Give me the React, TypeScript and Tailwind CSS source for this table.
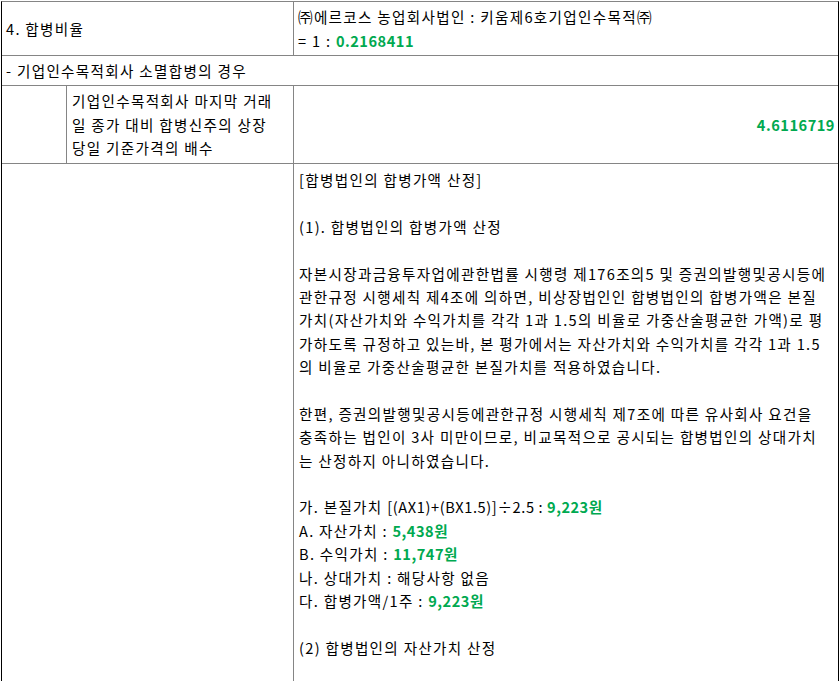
const green = "font-bold tracking-[0.5px] text-[#00a950]";

const valuationLines: { text: string; formula?: string; value?: string }[] = [
  { text: "[합병법인의 합병가액 산정]" },
  { text: "" },
  { text: "(1). 합병법인의 합병가액 산정" },
  { text: "" },
  { text: "자본시장과금융투자업에관한법률 시행령 제176조의5 및 증권의발행및공시등에" },
  { text: "관한규정 시행세칙 제4조에 의하면, 비상장법인인 합병법인의 합병가액은 본질" },
  { text: "가치(자산가치와 수익가치를 각각 1과 1.5의 비율로 가중산술평균한 가액)로 평" },
  { text: "가하도록 규정하고 있는바, 본 평가에서는 자산가치와 수익가치를 각각 1과 1.5" },
  { text: "의 비율로 가중산술평균한 본질가치를 적용하였습니다." },
  { text: "" },
  { text: "한편, 증권의발행및공시등에관한규정 시행세칙 제7조에 따른 유사회사 요건을" },
  { text: "충족하는 법인이 3사 미만이므로, 비교목적으로 공시되는 합병법인의 상대가치" },
  { text: "는 산정하지 아니하였습니다." },
  { text: "" },
  { text: "가. 본질가치 ", formula: "[(AX1)+(BX1.5)]÷2.5 : ", value: "9,223원" },
  { text: "A. 자산가치 : ", value: "5,438원" },
  { text: "B. 수익가치 : ", value: "11,747원" },
  { text: "나. 상대가치 : 해당사항 없음" },
  { text: "다. 합병가액/1주 : ", value: "9,223원" },
  { text: "" },
  { text: "(2) 합병법인의 자산가치 산정" },
  { text: "" },
  { text: "" },
];

function App() {
  return (
    <div className="min-h-screen w-full bg-white pl-px pt-px font-['Noto_Sans_CJK_KR',sans-serif] text-[14.6px] leading-[23.4px] tracking-[1.3px] text-black">
      <div className="w-[838px] border-x border-t border-x-black border-t-[#858585]">
        {/* 4. 합병비율 */}
        <div className="flex h-[54px] border-b border-[#858585]">
          <div className="flex w-[292px] items-center border-r border-[#858585] pl-[4px]">
            4. 합병비율
          </div>
          <div className="flex flex-1 flex-col justify-center pl-[4px]">
            <div className="whitespace-nowrap">㈜에르코스 농업회사법인 : 키움제6호기업인수목적㈜</div>
            <div className="whitespace-nowrap">
              = 1 : <span className={green}>0.2168411</span>
            </div>
          </div>
        </div>

        <div className="flex h-[30px] items-center border-b border-[#858585] pl-[4px]">
          - 기업인수목적회사 소멸합병의 경우
        </div>

        <div className="flex h-[78px] border-b border-[#858585]">
          <div className="w-[65px] border-r border-[#858585]" />
          <div className="flex w-[227px] flex-col justify-center border-r border-[#858585] pl-[5px]">
            <div className="whitespace-nowrap">기업인수목적회사 마지막 거래</div>
            <div className="whitespace-nowrap">일 종가 대비 합병신주의 상장</div>
            <div className="whitespace-nowrap">당일 기준가격의 배수</div>
          </div>
          <div className="flex flex-1 items-center justify-end pr-[3px]">
            <span className={green}>4.6116719</span>
          </div>
        </div>

        <div className="flex">
          <div className="w-[292px] border-r border-[#858585]" />
          <div className="flex-1 pl-[5px] pt-[4px]">
            {valuationLines.map((line, i) => (
              <div key={i} className="h-[23.4px] whitespace-nowrap">
                {line.text}
                {line.formula && <span className="tracking-[0.6px]">{line.formula}</span>}
                {line.value && <span className={green}>{line.value}</span>}
              </div>
            ))}
          </div>
        </div>
      </div>
    </div>
  );
}

export default App;
